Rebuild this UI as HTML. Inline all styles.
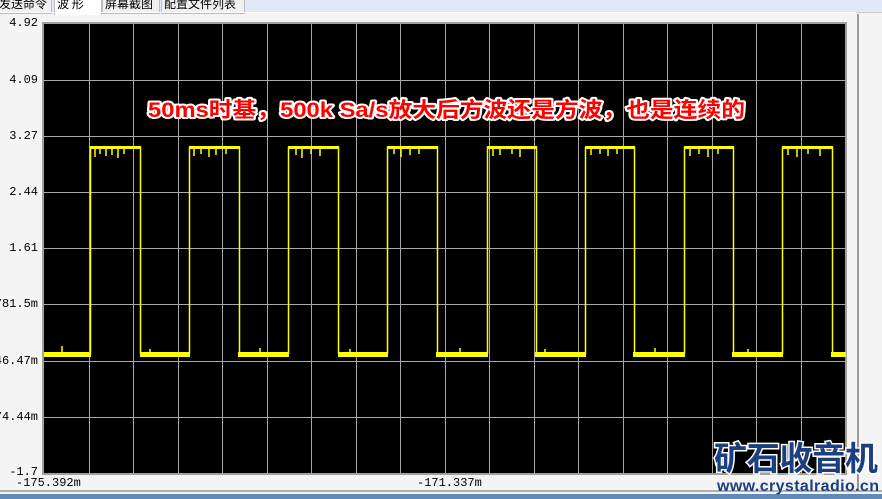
<!DOCTYPE html>
<html><head><meta charset="utf-8"><style>
body{margin:0;width:882px;height:499px;overflow:hidden;background:#f4f4f4;font-family:"Liberation Sans","Noto Sans CJK SC",sans-serif;position:relative}
.top{position:absolute;left:0;top:0;width:882px;height:12px;background:#dfe9f7;border-bottom:1px solid #c8ccd2}
.tab{position:absolute;top:-5px;height:17px;font-size:12px;line-height:15px;border:1px solid #b8bcc4;background:#f0f0f0;color:#000;padding:0 2px;font-family:"Noto Sans CJK SC",sans-serif;overflow:hidden;white-space:nowrap}
.lbl{position:absolute;font-family:"Liberation Mono","Noto Sans CJK SC",monospace;font-size:12px;color:#000;line-height:11px}
</style></head><body>
<div class="top"></div>
<div class="tab" style="left:-4px;width:50px">发送命令</div>
<div class="tab" style="left:54px;width:42px;background:#fff;border-bottom:none;height:19px">波 形</div>
<div class="tab" style="left:102px;width:52px">屏幕截图</div>
<div class="tab" style="left:161px;width:78px">配置文件列表</div>
<div style="position:absolute;left:0;top:12px;width:856px;height:1px;background:#fff"></div>
<div style="position:absolute;left:857px;top:14px;width:2px;height:478px;background:#9a9a9a"></div>
<div style="position:absolute;left:0;top:490px;width:882px;height:2px;background:#b0b0b0"></div>
<div style="position:absolute;left:0;top:494px;width:882px;height:5px;background:#5f8ab8"></div>

<div class="lbl" style="right:844px;top:18px">4.92</div>
<div class="lbl" style="right:844px;top:75px">4.09</div>
<div class="lbl" style="right:844px;top:131px">3.27</div>
<div class="lbl" style="right:844px;top:187px">2.44</div>
<div class="lbl" style="right:844px;top:243px">1.61</div>
<div class="lbl" style="right:844px;top:299px">781.5m</div>
<div class="lbl" style="right:844px;top:356px">-46.47m</div>
<div class="lbl" style="right:844px;top:412px">-874.44m</div>
<div class="lbl" style="right:844px;top:467px">-1.7</div>
<div class="lbl" style="left:16px;top:478px">-175.392m</div>
<div class="lbl" style="left:417px;top:478px">-171.337m</div>

<svg style="position:absolute;left:0;top:0" width="882" height="499">
<rect x="43" y="23" width="803" height="451" fill="#000" stroke="#a0a0a0" stroke-width="2"/>
<g stroke="#a8a8a8" stroke-width="1">
<line x1="89.5" y1="24" x2="89.5" y2="473"/><line x1="133.5" y1="24" x2="133.5" y2="473"/><line x1="178.5" y1="24" x2="178.5" y2="473"/><line x1="222.5" y1="24" x2="222.5" y2="473"/><line x1="267.5" y1="24" x2="267.5" y2="473"/><line x1="311.5" y1="24" x2="311.5" y2="473"/><line x1="356.5" y1="24" x2="356.5" y2="473"/><line x1="400.5" y1="24" x2="400.5" y2="473"/><line x1="445.5" y1="24" x2="445.5" y2="473"/><line x1="489.5" y1="24" x2="489.5" y2="473"/><line x1="534.5" y1="24" x2="534.5" y2="473"/><line x1="578.5" y1="24" x2="578.5" y2="473"/><line x1="623.5" y1="24" x2="623.5" y2="473"/><line x1="667.5" y1="24" x2="667.5" y2="473"/><line x1="712.5" y1="24" x2="712.5" y2="473"/><line x1="756.5" y1="24" x2="756.5" y2="473"/><line x1="801.5" y1="24" x2="801.5" y2="473"/>
<line x1="44" y1="80.5" x2="846" y2="80.5"/><line x1="44" y1="136.5" x2="846" y2="136.5"/><line x1="44" y1="192.5" x2="846" y2="192.5"/><line x1="44" y1="248.5" x2="846" y2="248.5"/><line x1="44" y1="304.5" x2="846" y2="304.5"/><line x1="44" y1="361.5" x2="846" y2="361.5"/><line x1="44" y1="417.5" x2="846" y2="417.5"/>
</g>
<g fill="#ffff00">
<rect x="44" y="352" width="47" height="5"/><rect x="140" y="352" width="50" height="5"/><rect x="238" y="352" width="51" height="5"/><rect x="338" y="352" width="50" height="5"/><rect x="436" y="352" width="52" height="5"/><rect x="535" y="352" width="51" height="5"/><rect x="633" y="352" width="52" height="5"/><rect x="732" y="352" width="51" height="5"/><rect x="831" y="352" width="15" height="5"/>
<rect x="90" y="146" width="51" height="3"/><rect x="189" y="146" width="51" height="3"/><rect x="288" y="146" width="51" height="3"/><rect x="387" y="146" width="51" height="3"/><rect x="487" y="146" width="50" height="3"/><rect x="585" y="146" width="50" height="3"/><rect x="684" y="146" width="50" height="3"/><rect x="782" y="146" width="51" height="3"/>
</g>
<path fill="none" stroke="#ffff00" stroke-width="1.5" d="M90.5 354V147M140.5 147V354M189.5 354V147M239.5 147V354M288.5 354V147M338.5 147V354M387.5 354V147M437.5 147V354M487.5 354V147M536.5 147V354M585.5 354V147M634.5 147V354M684.5 354V147M733.5 147V354M782.5 354V147M832.5 147V354"/>
<path fill="none" stroke="#ffff00" stroke-width="1.5" d="M95 149v8M100 149v5M106 149v7M112 149v6M118 149v9M124 149v5M194 149v7M201 149v5M209 149v8M216 149v6M226 149v5M296 149v6M302 149v9M311 149v5M320 149v7M394 149v5M401 149v8M410 149v6M419 149v5M493 149v7M500 149v6M512 149v5M520 149v8M591 149v6M600 149v5M608 149v7M617 149v5M690 149v7M699 149v5M708 149v8M718 149v5M788 149v6M797 149v8M808 149v5M820 149v7M62 352v-6M150 352v-3M260 352v-4M350 352v-3M460 352v-4M545 352v-3M655 352v-4M748 352v-3"/>
<text x="148" y="117" textLength="597" lengthAdjust="spacingAndGlyphs" font-family="Liberation Sans,Noto Sans CJK SC,sans-serif" font-weight="bold" font-size="21" fill="#ff0000" stroke="#ffffff" stroke-width="4" paint-order="stroke" stroke-linejoin="round">50ms时基，500k Sa/s放大后方波还是方波，也是连续的</text>
<text x="714" y="470" font-family="Noto Sans CJK SC,sans-serif" font-weight="bold" font-size="33" fill="#1b3f7f" stroke="#ffffff" stroke-width="3" paint-order="stroke" textLength="164">矿石收音机</text>
<text x="717" y="491" font-family="Liberation Sans,sans-serif" font-weight="bold" font-size="16" fill="#1b3f7f" textLength="162">www.crystalradio.cn</text>
</svg>
</body></html>
